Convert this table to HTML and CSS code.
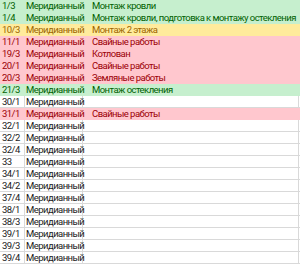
FILE: index.html
```html
<!DOCTYPE html>
<html lang="ru">
<head>
<meta charset="utf-8">
<link rel="stylesheet" href="styles.css">
</head>
<body>
<div class="sheet">
  <div class="row good"><span class="c a">1/3</span><span class="c b">Меридианный</span><span class="c d">Монтаж кровли</span></div>
  <div class="row good"><span class="c a">1/4</span><span class="c b">Меридианный</span><span class="c d">Монтаж кровли, подготовка к монтажу остекления</span></div>
  <div class="row neutral"><span class="c a">10/3</span><span class="c b">Меридианный</span><span class="c d">Монтаж 2 этажа</span></div>
  <div class="row bad"><span class="c a">11/1</span><span class="c b">Меридианный</span><span class="c d">Свайные работы</span></div>
  <div class="row bad"><span class="c a">19/3</span><span class="c b">Меридианный</span><span class="c d">Котлован</span></div>
  <div class="row bad"><span class="c a">20/1</span><span class="c b">Меридианный</span><span class="c d">Свайные работы</span></div>
  <div class="row bad"><span class="c a">20/3</span><span class="c b">Меридианный</span><span class="c d">Земляные работы</span></div>
  <div class="row good"><span class="c a">21/3</span><span class="c b">Меридианный</span><span class="c d">Монтаж остекления</span></div>
  <div class="row"><span class="c a">30/1</span><span class="c b">Меридианный</span><span class="c d"></span></div>
  <div class="row bad"><span class="c a">31/1</span><span class="c b">Меридианный</span><span class="c d">Свайные работы</span></div>
  <div class="row"><span class="c a">32/1</span><span class="c b">Меридианный</span><span class="c d"></span></div>
  <div class="row"><span class="c a">32/2</span><span class="c b">Меридианный</span><span class="c d"></span></div>
  <div class="row"><span class="c a">32/4</span><span class="c b">Меридианный</span><span class="c d"></span></div>
  <div class="row"><span class="c a">33</span><span class="c b">Меридианный</span><span class="c d"></span></div>
  <div class="row"><span class="c a">34/1</span><span class="c b">Меридианный</span><span class="c d"></span></div>
  <div class="row"><span class="c a">34/2</span><span class="c b">Меридианный</span><span class="c d"></span></div>
  <div class="row"><span class="c a">37/4</span><span class="c b">Меридианный</span><span class="c d"></span></div>
  <div class="row"><span class="c a">38/1</span><span class="c b">Меридианный</span><span class="c d"></span></div>
  <div class="row"><span class="c a">38/3</span><span class="c b">Меридианный</span><span class="c d"></span></div>
  <div class="row"><span class="c a">39/1</span><span class="c b">Меридианный</span><span class="c d"></span></div>
  <div class="row"><span class="c a">39/3</span><span class="c b">Меридианный</span><span class="c d"></span></div>
  <div class="row"><span class="c a">39/4</span><span class="c b">Меридианный</span><span class="c d"></span></div>
</div>
</body>
</html>
```
FILE: styles.css
```css
html, body {
  margin: 0;
  padding: 0;
  background: #ffffff;
}
.sheet {
  width: 300px;
  font-family: Roboto, "Noto Sans", sans-serif;
  font-size: 9.5px;
  letter-spacing: -0.55px;
  color: #1a1a1a;
}
.row {
  display: grid;
  grid-template-columns: 25px 58px 216px 1px;
  height: 12px;
  background: #ffffff;
}
.row::after {
  content: "";
  border-bottom: 1px solid #d9d9d9;
}
.c {
  box-sizing: border-box;
  min-width: 0;
  height: 12px;
  line-height: 11px;
  white-space: nowrap;
  border-bottom: 1px solid #d9d9d9;
  border-right: 1px solid #d9d9d9;
}
.a { padding-left: 2px; }
.b { padding-left: 1px; }
.d { padding-left: 9px; }
.good { background: #c6efce; color: #006100; }
.neutral { background: #ffeb9c; color: #9c6500; }
.bad { background: #ffc7ce; color: #9c0006; }
.good .c, .neutral .c, .bad .c, .good::after, .neutral::after, .bad::after {
  border-color: transparent;
}
```
